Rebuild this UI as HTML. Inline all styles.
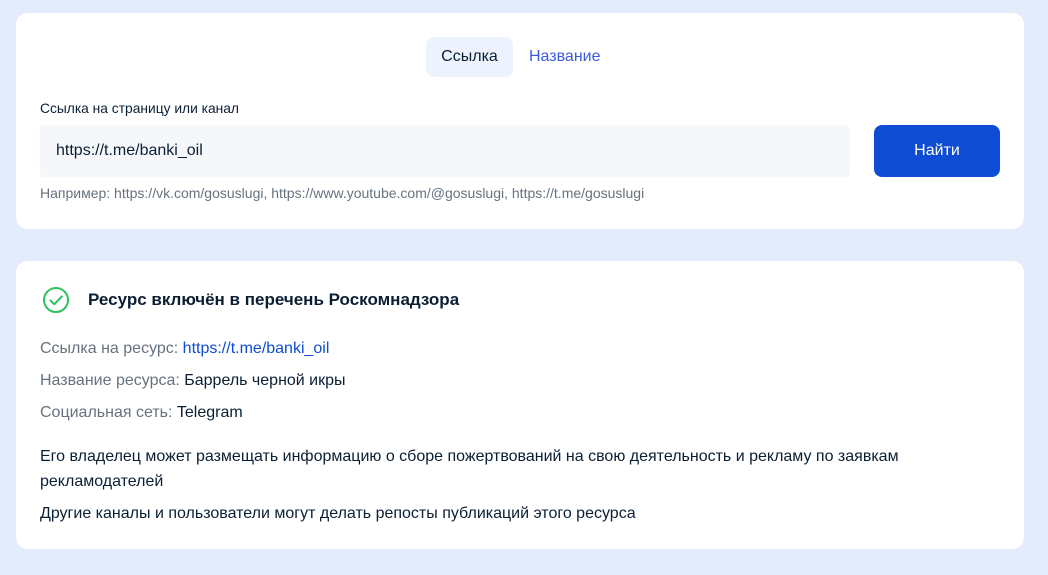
<!DOCTYPE html>
<html><head><meta charset="utf-8"><style>
body{margin:0;background:#e4ebfa;font-family:"Liberation Sans",sans-serif;width:1048px;height:575px;overflow:hidden;color:#0b1f33}
.card{position:absolute;left:16px;width:1008px;background:#fff;border-radius:12px}
.abs{position:absolute}
</style></head><body>
<div class="card" style="top:13px;height:216px">
  <div class="abs" style="left:410px;top:24px;width:87px;height:40px;background:#edf2fe;border-radius:8px;font-size:16px;line-height:40px;text-align:center">Ссылка</div>
  <div class="abs" style="left:513px;top:24px;font-size:16px;line-height:40px;color:#3b5bdb">Название</div>
  <div class="abs" style="left:24px;top:88px;font-size:13.8px">Ссылка на страницу или канал</div>
  <div class="abs" style="left:24px;top:112px;width:810px;height:52px;background:#f5f7fa;border-radius:4px;font-size:16px;line-height:52px;padding-left:16px;box-sizing:border-box">https://t.me/banki_oil</div>
  <div class="abs" style="left:858px;top:112px;width:126px;height:52px;background:#0d4cd3;border-radius:8px;color:#fff;font-size:16px;line-height:52px;text-align:center">Найти</div>
  <div class="abs" style="left:24px;top:172px;font-size:14px;color:#66727f">Например: https://vk.com/gosuslugi, https://www.youtube.com/@gosuslugi, https://t.me/gosuslugi</div>
</div>
<div class="card" style="top:261px;height:288px">
  <svg class="abs" style="left:26px;top:25px" width="28" height="28" viewBox="0 0 28 28"><circle cx="14" cy="14" r="12" fill="none" stroke="#2fc061" stroke-width="2"/><path d="M8.5 14.5l3.8 3.8 7.5-7.8" fill="none" stroke="#2fc061" stroke-width="2" stroke-linecap="round" stroke-linejoin="round"/></svg>
  <div class="abs" style="left:72px;top:29px;font-size:17px;font-weight:bold">Ресурс включён в перечень Роскомнадзора</div>
  <div class="abs" style="left:24px;top:79px;font-size:16px;color:#66727f">Ссылка на ресурс: <span style="color:#0d4cd3">https://t.me/banki_oil</span></div>
  <div class="abs" style="left:24px;top:111px;font-size:16px;color:#66727f">Название ресурса: <span style="color:#0b1f33">Баррель черной икры</span></div>
  <div class="abs" style="left:24px;top:143px;font-size:16px;color:#66727f">Социальная сеть: <span style="color:#0b1f33">Telegram</span></div>
  <div class="abs" style="left:24px;top:183px;width:880px;font-size:16px;line-height:25px">Его владелец может размещать информацию о сборе пожертвований на свою деятельность и рекламу по заявкам рекламодателей</div>
  <div class="abs" style="left:24px;top:241px;font-size:16px;line-height:24px">Другие каналы и пользователи могут делать репосты публикаций этого ресурса</div>
</div>
</body></html>
